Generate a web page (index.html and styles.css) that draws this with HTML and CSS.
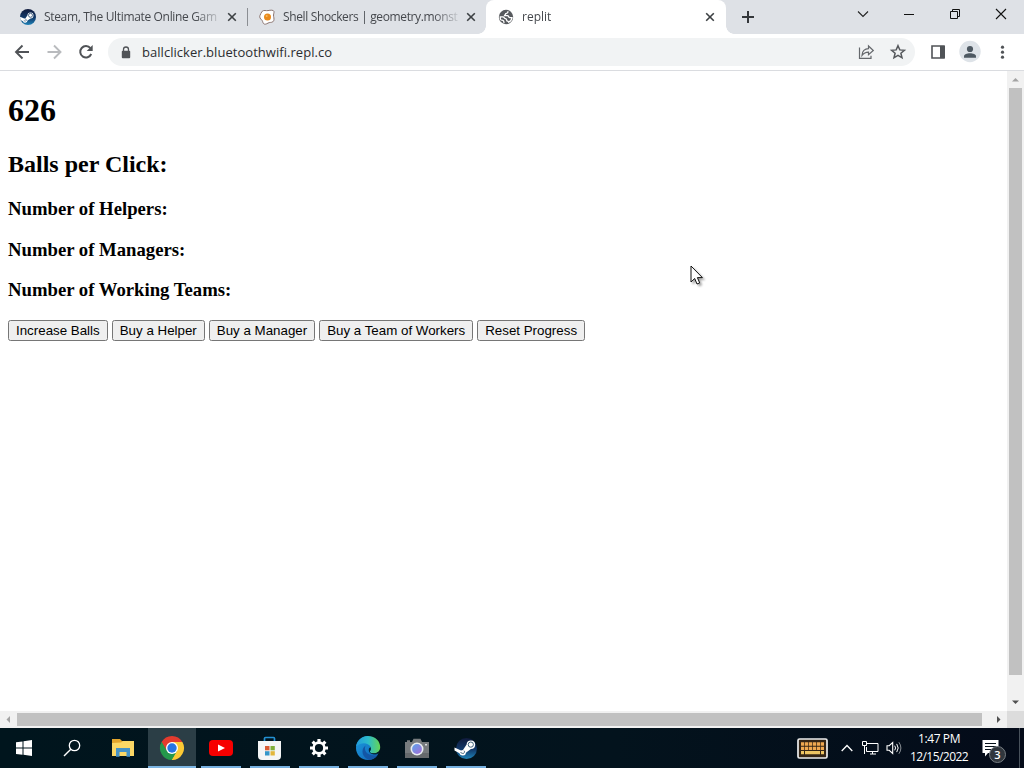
FILE: index.html
```html
<!DOCTYPE html>
<html lang="en">
<head>
  <meta charset="UTF-8">
  <title>replit</title>
  <link rel="stylesheet" href="styles.css">
</head>
<body>
  <svg width="0" height="0" class="defs">
    <defs>
      <linearGradient id="steamBlue" x1="0" y1="0" x2="0" y2="1">
        <stop offset="0" stop-color="#101a3c"/><stop offset=".55" stop-color="#123a6b"/><stop offset="1" stop-color="#1e83b8"/>
      </linearGradient>
      <linearGradient id="edgeGreen" x1="0" y1="0" x2="1" y2="0">
        <stop offset="0" stop-color="#229bdc"/><stop offset=".5" stop-color="#2cbccb"/><stop offset="1" stop-color="#65d454"/>
      </linearGradient>
      <linearGradient id="edgeBlue" x1="0" y1="0" x2="1" y2="1">
        <stop offset="0" stop-color="#1b9de0"/><stop offset="1" stop-color="#1160b4"/>
      </linearGradient>
      <linearGradient id="lens" x1="0" y1="0" x2="1" y2="1">
        <stop offset="0" stop-color="#5ba5ee"/><stop offset="1" stop-color="#a66bd4"/>
      </linearGradient>
      <symbol id="close" viewBox="0 0 10 10"><path d="M1.200 1.200l7.600 7.600M8.800 1.200L1.200 8.800" stroke="currentColor" stroke-width="1.600"/></symbol>
      <symbol id="steam" viewBox="0 0 16 16">
        <circle cx="8" cy="8" r="8" fill="url(#steamBlue)"/>
        <path d="M0 7.800l4.200 1.800 1.300-.3 2-3a3 3 0 1 1 3 3.200l-3 2.100a2.300 2.300 0 0 1-4.500.6L.5 11z" fill="#fff"/>
        <circle cx="10.500" cy="6.300" r="2" fill="#fff" stroke="#24466d" stroke-width=".8"/>
        <path d="M3.800 11.500l1.100.5a1 1 0 0 0 .9-1.800l-1-.4" fill="none" stroke="#24466d" stroke-width=".6"/>
      </symbol>
    </defs>
  </svg>

  <div class="tabstrip">
    <div class="tab">
      <svg class="favicon" viewBox="0 0 16 16"><use href="#steam"/></svg>
      <span class="title t1">Steam, The Ultimate Online Gam</span>
      <svg class="close"><use href="#close"/></svg>
    </div>
    <div class="tab divided">
      <svg class="favicon" viewBox="0 0 16 16">
        <path d="M3.200 2.300C5 .7 7 2 9 1.600c2.500-.6 5.700-.8 6 1 .2 1.500-.8 2.800-.4 4.700.4 2 .9 4.300-.8 5.500-1.500 1-3.300.3-4.800 1.300-1.600 1-3.500 1.700-4.600.3-.9-1.200-.5-2.400-1.800-3.500C1.300 9.800.3 8.200.9 6.700c.5-1.300 1.400-3.400 2.300-4.400z" fill="#fff" stroke="#8b7470" stroke-width="1"/>
        <circle cx="8.500" cy="8" r="3.500" fill="#e98a1c"/><circle cx="7.700" cy="7" r="1" fill="#f8b95d"/>
      </svg>
      <span class="title t2">Shell Shockers | geometry.monst</span>
      <svg class="close"><use href="#close"/></svg>
    </div>
    <div class="tab active">
      <svg class="favicon" viewBox="0 0 16 16">
        <circle cx="8" cy="8" r="7.200" fill="#575a5e"/>
        <path d="M9.700 2.300c.5 1.400-.4 2.200-1.900 2.300-.1 1.200-1.300 1-1.300 2h3c1.300 0 1 2 2.300 2h2.200c-.3 2.200-1.700 3.800-3.400 4.500-.3-1.300-1.700-.5-1.900-1.800 0-1.200-.3-1.300-1.300-1.600C6.200 9.400 6.300 7.800 4.800 7.800H2.300C2.400 9 2 9.500 2.600 10.600c.8.800 2.400.3 3 1.300.3.700 0 1.200.8 1.900" fill="none" stroke="#fff" stroke-width="1.300"/>
      </svg>
      <span class="title">replit</span>
      <svg class="close"><use href="#close"/></svg>
    </div>
    <svg class="newtab" viewBox="0 0 12 12"><path d="M6 0v12M0 6h12" stroke="#34373b" stroke-width="2"/></svg>
    <div class="window-buttons">
      <svg viewBox="0 0 46 28"><path d="M18 11.500l5 5 5-5" fill="none" stroke="#222" stroke-width="1.100"/></svg>
      <svg viewBox="0 0 46 28"><path d="M18 14.500h10" stroke="#111"/></svg>
      <svg viewBox="0 0 46 28"><path d="M18.500 11.500h7v7h-7zM20.500 11v-1.500h7v7H26" fill="none" stroke="#111"/></svg>
      <svg viewBox="0 0 46 28"><path d="M18 9l10 10M28 9L18 19" stroke="#111" stroke-width="1.100"/></svg>
    </div>
  </div>

  <div class="toolbar">
    <svg class="tool" viewBox="0 0 32 32"><path d="M23 16H10M16.500 9.500L10 16l6.500 6.500" fill="none" stroke="#505357" stroke-width="1.900"/></svg>
    <svg class="tool" viewBox="0 0 32 32"><path d="M9.500 16h13M16 9.500l6.500 6.500-6.500 6.500" fill="none" stroke="#b9bbbe" stroke-width="1.900"/></svg>
    <svg class="tool" viewBox="0 0 32 32"><path d="M21.200 18a5.700 5.700 0 1 1-.8-5.800" fill="none" stroke="#505357" stroke-width="2"/><path d="M22.700 9v6h-6z" fill="#505357"/></svg>
    <div class="omnibox">
      <svg class="lock" viewBox="0 0 10 13"><path d="M2.500 5.500V3.500a2.500 2.500 0 0 1 5 0v2" fill="none" stroke="#505357" stroke-width="1.300"/><rect x=".8" y="4.800" width="8.400" height="7.400" rx="1" fill="#505357"/></svg>
      <span class="url">ballclicker.bluetoothwifi.repl.co</span>
      <svg class="tool" viewBox="0 0 32 32"><path d="M9.500 11.500v10.800H21v-2.500M12 19.500c0-4.500 2.800-6.800 6.500-6.800V10l4.800 4.500-4.800 4.200v-2.600c-3 0-4.800 1-6.500 3.400z" fill="none" stroke="#65686c" stroke-width="1.200"/></svg>
      <svg class="tool" viewBox="0 0 32 32"><path d="M16 9.700l1.800 4.200 4.600.4-3.500 3 1.100 4.500-4-2.400-4 2.400 1.100-4.500-3.500-3 4.600-.4z" fill="none" stroke="#55585c" stroke-width="1.500"/></svg>
    </div>
    <svg class="tool" viewBox="0 0 32 32"><path d="M10 10h12v12H10z" fill="none" stroke="#505357" stroke-width="1.600"/><path d="M18 10h5v12h-5z" fill="#505357"/></svg>
    <svg class="tool" viewBox="0 0 32 32"><circle cx="16" cy="15.500" r="10.700" fill="#dee3e8"/><circle cx="16" cy="13" r="3.100" fill="#4e5962"/><path d="M10 21.800v-1.500c0-4 12-4 12 0v1.500z" fill="#4e5962"/></svg>
    <svg class="tool" viewBox="0 0 32 32"><g fill="#505357"><circle cx="16.500" cy="11.200" r="1.600"/><circle cx="16.500" cy="16.200" r="1.600"/><circle cx="16.500" cy="21.200" r="1.600"/></g></svg>
  </div>

  <div class="viewport">
    <div class="page">
      <h1>626</h1>
      <h2>Balls per Click:</h2>
      <h3>Number of Helpers:</h3>
      <h3>Number of Managers:</h3>
      <h3>Number of Working Teams:</h3>
      <button>Increase Balls</button>
      <button>Buy a Helper</button>
      <button>Buy a Manager</button>
      <button>Buy a Team of Workers</button>
      <button>Reset Progress</button>
    </div>
    <div class="scroll-y">
      <svg viewBox="0 0 17 17"><path d="M5 10.500h7L8.500 7z" fill="#a3a3a3"/></svg>
      <div class="thumb"></div>
      <svg viewBox="0 0 17 17"><path d="M5 6.500h7L8.500 10z" fill="#505050"/></svg>
    </div>
    <div class="scroll-x">
      <svg viewBox="0 0 17 17"><path d="M10 5v7L6.500 8.500z" fill="#a3a3a3"/></svg>
      <div class="thumb"></div>
      <svg viewBox="0 0 17 17"><path d="M7 5v7l3.500-3.500z" fill="#505050"/></svg>
    </div>
    <div class="corner"></div>
  </div>

  <div class="taskbar">
    <div class="app"><svg viewBox="0 0 48 40"><path d="M16 14.300l6.500-.9v6.200H16zM23.500 13.200l8.500-1.200v7.600h-8.500zM16 20.600h6.500v6.200l-6.500-.9zM23.500 20.600H32V28l-8.500-1.200z" fill="#fff"/></svg></div>
    <div class="app"><svg viewBox="0 0 48 40"><circle cx="25.500" cy="17.500" r="5.200" fill="none" stroke="#fff" stroke-width="1.300"/><path d="M21.800 21.200L15 28" stroke="#fff" stroke-width="1.400"/></svg></div>
    <div class="app"><svg viewBox="0 0 48 40">
      <path d="M14 11h8l2 2h11v4H14z" fill="#e3a52c"/><path d="M14 15l9-.5 2-1.500h11v15H14z" fill="#fbd765"/>
      <path d="M18 20h14v8.700h-3.500V24h-7v4.700H18z" fill="#4592c6"/>
    </svg></div>
    <div class="app current"><svg viewBox="0 0 48 40">
      <path d="M24 20L13.600 14a12 12 0 0 1 20.800 0z" fill="#e33b2e"/>
      <path d="M24 20l10.400-6A12 12 0 0 1 24 32z" fill="#fcc934"/>
      <path d="M24 20v12a12 12 0 0 1-10.400-18z" fill="#25984b"/>
      <path d="M24 14h10.400l-5.200 9z" fill="#fcc934"/><path d="M29.200 23L24 32l-5.200-9z" fill="#25984b"/><path d="M29.200 23L24 32h1l6-10z" fill="#fcc934"/><path d="M13.600 14l5.200 9L24 14z" fill="#e33b2e"/><path d="M13.600 14l5.200 9-2 2-4.600-7z" fill="#25984b"/>
      <circle cx="24" cy="20" r="6" fill="#fff"/><circle cx="24" cy="20" r="4.700" fill="#2674e3"/>
    </svg></div>
    <div class="app open"><svg viewBox="0 0 48 40"><rect x="12" y="12" width="24" height="16" rx="4" fill="#f70000"/><path d="M21 16.500l7 3.500-7 3.500z" fill="#fff"/></svg></div>
    <div class="app open"><svg viewBox="0 0 48 40">
      <path d="M18.500 14v-3.500q0-1 1-1h8q1 0 1 1V14" fill="none" stroke="#2391d3" stroke-width="1.700"/>
      <path d="M12 13h23v15q0 4-4 4H16q-4 0-4-4z" fill="#f4f5f5"/>
      <path d="M19 18h4.500v4.300H19z" fill="#d85a32"/><path d="M24.500 18h4.300v4.300h-4.300z" fill="#80ae39"/><path d="M19 23.200h4.500v4.300H19z" fill="#3596c9"/><path d="M24.500 23.200h4.300v4.300h-4.300z" fill="#e2b63a"/>
    </svg></div>
    <div class="app open"><svg viewBox="0 0 48 40">
      <circle cx="24" cy="20" r="5.400" fill="none" stroke="#fff" stroke-width="2.600"/>
      <g stroke="#fff" stroke-width="3.200"><path d="M24 11v3M24 26v3M15 20h3M30 20h3"/><path d="M24 11v3M24 26v3M15 20h3M30 20h3" transform="rotate(45 24 20)"/></g>
    </svg></div>
    <div class="app open"><svg viewBox="0 0 48 40">
      <path d="M12 20C12 13 17.500 8 24 8l3 12-1.500 2c-.5 2 1.500 4.300 5 4.300 1.700 0 3.200-.6 4-1C32.500 29.500 29 32 24 32c-7 0-12-5.500-12-12z" fill="url(#edgeBlue)"/>
      <path d="M12.100 18.500C13 12.500 18 8 24 8c7.500 0 12.200 5.500 12.200 11 0 4-3 6.300-6.500 6.300-3 0-4.500-1-3.500-2.600 3.200-5.700-6.400-11.300-14.100-4.200z" fill="url(#edgeGreen)"/>
      <path d="M21.500 17.500c-2 5 1.500 11.300 12 9.800-2.200 2.900-5 4.300-8 4.600-7-1.400-9.500-10.400-4-14.400z" fill="#1356a5"/>
      <path d="M26.300 22.400c-1.200 1.700.8 3 3.700 3 1.800 0 3.400-.4 4.600-1.300l-.5 1.700c-4 1.300-8.800.2-9.300-3.200-.2-1.800.5-3 1.800-3.300.5 1 .4 2.100-.3 3.100z" fill="#062a3c"/>
    </svg></div>
    <div class="app open"><svg viewBox="0 0 48 40">
      <path d="M12 14h2v-1.700h3V14h2l1.500-3.200h7L29 14h7v16H12z" fill="#777b7e"/><path d="M12 25h24v5H12z" fill="#65696c"/>
      <circle cx="24" cy="21" r="6.500" fill="#e9edf1"/><circle cx="24" cy="21" r="4.900" fill="url(#lens)"/><path d="M32 16h2v1.500h-2z" fill="#d7dadc"/>
    </svg></div>
    <div class="app open"><svg viewBox="0 0 48 40"><circle cx="24.500" cy="20.500" r="10.500" fill="url(#steamBlue)"/>
      <path d="M12.500 19.500l6.500 3 2-.6 3.600-5.500a4.300 4.300 0 1 1 4.300 4.600l-4.700 3.500a3.500 3.500 0 0 1-6.800.7l-4.900-2.700z" fill="#fff"/><circle cx="28.800" cy="16.600" r="2.600" fill="#fff" stroke="#2e526e" stroke-width=".9"/><path d="M18.500 24.500l2 .9a1.600 1.600 0 0 0 1.500-2.700" fill="none" stroke="#2e526e" stroke-width=".9"/>
    </svg></div>

    <div class="tray">
      <svg class="keyboard" viewBox="0 0 31 21">
        <rect x="1" y="1" width="29" height="19" rx="1.500" fill="#332415" stroke="#eee" stroke-width="1.700"/>
        <path d="M4 6h23M4 10.300h23" stroke="#f0a850" stroke-width="3.300" stroke-dasharray="3.300 .7"/>
        <path d="M4 14.700h23" stroke="#edc462" stroke-width="3.200" stroke-dasharray="3 1 15 1 3"/>
      </svg>
      <svg class="chevron" viewBox="0 0 12 8"><path d="M.7 7L6 1.500 11.300 7" fill="none" stroke="#fff" stroke-width="1.300"/></svg>
      <svg class="network" viewBox="0 0 17 14"><path d="M5 2.500h11v8H4.500V6M8 13h6M10.500 10.500V13M.5.500h4v4h-4zM2.500 4.500V13" fill="none" stroke="#fff"/></svg>
      <svg class="volume" viewBox="0 0 17 14"><path d="M1 4.700h2.200L6.700 1.500v11L3.200 9.300H1z" fill="none" stroke="#fff" stroke-width="1.100"/><path d="M8.700 4.700q1.800 2.300 0 4.600M10.700 2.900q3 4.100 0 8.200" fill="none" stroke="#fff"/><path d="M12.900 1.200q4 5.800 0 11.600" fill="none" stroke="#8a9095"/></svg>
      <div class="clock"><span class="time">1:47 PM</span><span class="date">12/15/2022</span></div>
      <div class="notify">
        <svg viewBox="0 0 17 18"><path d="M.5 1h16v13H6l-3 3.500V14H.5z" fill="#fff"/><path d="M3 4.500h11M3 7.500h11M3 10.500h7" stroke="#051019"/></svg>
        <span class="badge">3</span>
      </div>
      <div class="show-desktop"></div>
    </div>
  </div>

  <svg class="cursor" viewBox="0 0 13 20"><path d="M1 1v16l3.700-3.500L7 19l2.700-1.100-2.300-5.300h5z" fill="#fff" stroke="#111"/></svg>
</body>
</html>
```
FILE: styles.css
```css
* { box-sizing: border-box; }
body { margin: 0; width: 1024px; height: 768px; display: flex; flex-direction: column; overflow: hidden; background: #fff; font-family: "Open Sans", sans-serif; }
svg { display: block; flex: none; }
.defs { position: absolute; }

/* tabs */
.tabstrip { height: 34px; flex: none; display: flex; padding-left: 8px; background: #dee1e6; }
.tab { width: 239px; display: flex; align-items: center; padding: 0 10px 0 12px; color: #45484d; }
.tab.divided { background: linear-gradient(#8b8e93, #8b8e93) left 8px / 1px 18px no-repeat; }
.tab.active { width: 240px; padding-right: 11px; background: #fff; border-radius: 8px 8px 0 0; position: relative; }
.tab.active::before, .tab.active::after { content: ""; position: absolute; bottom: 0; width: 8px; height: 8px; }
.tab.active::before { left: -8px; background: radial-gradient(circle at 0 0, #dee1e6 7.5px, #fff 8px); }
.tab.active::after { right: -8px; background: radial-gradient(circle at 100% 0, #dee1e6 7.5px, #fff 8px); }
.favicon { width: 16px; height: 16px; }
.title { width: 176px; margin-left: 8px; font-size: 12px; line-height: 18px; white-space: nowrap; -webkit-mask-image: linear-gradient(90deg, #000 150px, rgba(0,0,0,0.15) 175px); }
.t1 { letter-spacing: -0.34px; }
.t2 { letter-spacing: -0.36px; }
.close { width: 10px; height: 10px; margin-left: auto; color: #3c4043; }
.newtab { width: 12px; height: 12px; margin: 11px 0 0 16px; }
.window-buttons { display: flex; margin-left: auto; }
.window-buttons svg { width: 46px; height: 28px; }

/* address bar */
.toolbar { height: 37px; flex: none; display: flex; align-items: center; padding: 0 6px; background: #fff; border-bottom: 1px solid #dadce0; }
.tool { width: 32px; height: 32px; }
.omnibox { flex: 1; height: 28px; display: flex; align-items: center; margin: 0 7px 0 6px; padding: 0 1px 0 13px; border-radius: 14px; background: #f1f3f4; }
.lock { width: 10px; height: 13px; }
.url { flex: 1; margin-left: 11px; font-size: 13px; line-height: 20px; letter-spacing: 0.04px; color: #2b2d30; }

/* web page and scrollbars */
.viewport { flex: 1; min-height: 0; display: grid; grid-template: 1fr 17px / 1fr 17px; }
.page { padding: 0 8px; font-family: "Liberation Serif", serif; color: #000; overflow: hidden; }
.page button { font-family: "Liberation Sans", sans-serif; }
.scroll-y, .scroll-x { display: flex; background: #f1f1f1; }
.scroll-y { flex-direction: column; }
.scroll-x { grid-row: 2; }
.scroll-y svg, .scroll-x svg { width: 17px; height: 17px; }
.thumb { flex: 1; background: #c1c1c1; }
.scroll-y .thumb { margin: 0 2px 19px; }
.scroll-x .thumb { margin: 2px 8px 2px 0; }
.corner { background: #dcdcdc; }

/* taskbar */
.taskbar { height: 40px; flex: none; display: flex; gap: 1px; color: #fff; background: linear-gradient(90deg, #00151d, #03131d 60%, #040b19); }
.app { width: 48px; height: 40px; }
.app svg { width: 48px; height: 40px; }
.app.current { margin-left: 1px; background: linear-gradient(#2b3e46 38px, #7cb5e3 38px); }
.app.open { background: linear-gradient(#76b0e0, #76b0e0) 4px 38px / 40px 2px no-repeat; }
.tray { display: flex; align-items: center; margin-left: auto; }
.keyboard { width: 31px; height: 21px; margin-right: 13px; }
.chevron { width: 12px; height: 8px; margin-right: 9px; }
.network { width: 17px; height: 14px; margin-right: 7px; }
.volume { width: 17px; height: 14px; margin-right: 6px; }
.clock { width: 60px; display: flex; flex-direction: column; align-items: center; font-size: 12px; line-height: 18px; white-space: nowrap; }
.time { letter-spacing: -0.4px; }
.date { letter-spacing: -0.55px; }
.notify { position: relative; width: 17px; height: 18px; margin: 0 20px 0 13px; }
.notify svg { width: 17px; height: 18px; }
.badge { position: absolute; left: 7px; top: 7px; width: 17px; height: 17px; border: 1px solid #777e84; border-radius: 50%; background: #30363d; font-size: 11px; font-weight: 600; line-height: 15px; text-align: center; }
.show-desktop { width: 5px; height: 40px; border-left: 1px solid #48515b; }

.cursor { position: absolute; left: 690px; top: 265px; width: 13px; height: 20px; filter: drop-shadow(2px 2px 1px rgba(0,0,0,0.35)); }
```
